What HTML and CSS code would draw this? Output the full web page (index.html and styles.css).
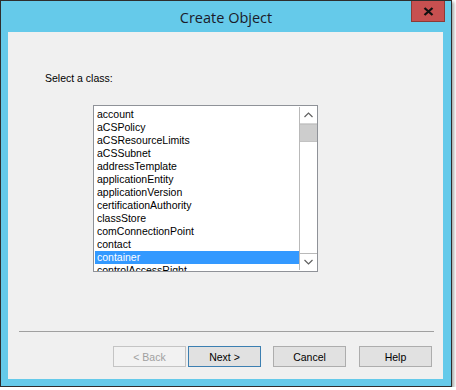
FILE: index.html
```html
<!DOCTYPE html>
<html lang="en">
<head>
    <meta charset="UTF-8">
    <meta name="viewport" content="width=device-width, initial-scale=1.0">
    <title>Create Object</title>
    <link rel="stylesheet" href="styles.css">
</head>
<body>

<div class="window">
    <!-- Title bar -->
    <div class="titlebar">
        <span class="title">Create Object</span>
        <button class="close-btn" title="Close">
            <svg width="11" height="9" viewBox="0 0 11 9">
                <path d="M1.5 1 L9.5 8 M9.5 1 L1.5 8" stroke="#111" stroke-width="2.3" fill="none"/>
            </svg>
        </button>
    </div>

    <!-- Dialog body -->
    <div class="panel">
        <p class="label">Select a class:</p>

        <div class="listbox">
            <ul class="items" id="classList"></ul>
            <div class="scrollbar">
                <div class="sb-btn">
                    <svg width="9" height="6" viewBox="0 0 9 6"><path d="M0.5 5 L4.5 1 L8.5 5" stroke="#606060" stroke-width="1.2" fill="none"/></svg>
                </div>
                <div class="sb-thumb"></div>
                <div class="sb-track"></div>
                <div class="sb-btn">
                    <svg width="9" height="6" viewBox="0 0 9 6"><path d="M0.5 1 L4.5 5 L8.5 1" stroke="#606060" stroke-width="1.2" fill="none"/></svg>
                </div>
            </div>
        </div>

        <div class="separator"></div>

        <div class="button-row">
            <button class="btn" disabled>&lt; Back</button>
            <button class="btn default">Next &gt;</button>
            <button class="btn gap">Cancel</button>
            <button class="btn gap wide">Help</button>
        </div>
    </div>
</div>

<script>
    // Classes shown in the list
    const classes = [
        "account", "aCSPolicy", "aCSResourceLimits", "aCSSubnet",
        "addressTemplate", "applicationEntity", "applicationVersion",
        "certificationAuthority", "classStore", "comConnectionPoint",
        "contact", "container", "controlAccessRight"
    ];
    const selected = "container";

    const list = document.getElementById('classList');
    classes.forEach(function (name) {
        const li = document.createElement('li');
        li.textContent = name;
        if (name === selected) {
            li.className = 'selected';
        }
        list.appendChild(li);
    });
</script>

</body>
</html>
```

FILE: styles.css
```css
body {
    margin: 0;
    background: #ffffff;
    font-family: "Liberation Sans", Arial, sans-serif;
    font-size: 10.5px;
    color: #000;
}

.window {
    width: 450px;
    height: 385px;
    border: 1px solid #2e2e2e;
    background: #65caea;
    box-shadow: 2px 2px 3px rgba(0, 0, 0, 0.35);
    display: flex;
    flex-direction: column;
}

.titlebar {
    position: relative;
    height: 31px;
    display: flex;
    align-items: center;
    justify-content: center;
}
.title {
    font-family: "Open Sans", sans-serif;
    font-size: 14.5px;
    color: #1b1b2a;
    margin-top: 1px;
}
.close-btn {
    position: absolute;
    top: 0;
    right: 6px;
    width: 34px;
    height: 21px;
    padding: 0;
    border: 1px solid #8c3a36;
    border-top: none;
    background: #c75050;
    display: flex;
    align-items: center;
    justify-content: center;
}

.panel {
    flex: 1;
    margin: 0 8px 7px 7px;
    background: #f0f0f0;
    padding: 40px 0 0 0;
    display: flex;
    flex-direction: column;
}

.label {
    margin: 0 0 0 37px;
    line-height: 13px;
}

.listbox {
    margin: 20px 0 0 85px;
    width: 223px;
    height: 165px;
    border: 1px solid #8f9298;
    background: #fff;
    display: flex;
    overflow: hidden;
}
.items {
    list-style: none;
    margin: 0;
    padding: 2px 0 0 1px;
    flex: 1;
    overflow: hidden;
}
.items li {
    height: 13px;
    line-height: 13px;
    padding-left: 2px;
    white-space: nowrap;
}
.items li.selected {
    background: #3399ff;
    color: #fff;
}

.scrollbar {
    width: 17px;
    margin: 1px 0;
    border-left: 1px solid #b9b9b9;
    display: flex;
    flex-direction: column;
}
.sb-btn {
    height: 16px;
    display: flex;
    align-items: center;
    justify-content: center;
    border-bottom: 1px solid #d4d4d4;
}
.sb-btn:last-child {
    border-bottom: none;
    border-top: 1px solid #b9b9b9;
}
.sb-thumb {
    height: 16px;
    background: #cdcdcd;
    border: 1px solid #c2c2c2;
    border-left: none;
    border-right: none;
}
.sb-track {
    flex: 1;
}

.separator {
    margin: 59px 9px 0 11px;
    height: 1px;
    background: #a0a0a0;
}

.button-row {
    margin: 14px 0 0 105px;
    display: flex;
}
.btn {
    width: 73px;
    height: 21px;
    padding: 0;
    margin-left: 2px;
    font-family: "Liberation Sans", Arial, sans-serif;
    font-size: 10.5px;
    color: #000;
    background: #e1e1e1;
    border: 1px solid #adadad;
}
.btn:first-child {
    margin-left: 0;
}
.btn.gap {
    margin-left: 12px;
}
.btn.wide {
    margin-left: 13px;
}
.btn.default {
    border-color: #3c7fb1;
}
.btn:disabled {
    color: #a0a0a0;
    background: #f2f2f2;
    border-color: #c4c4c4;
}
```
